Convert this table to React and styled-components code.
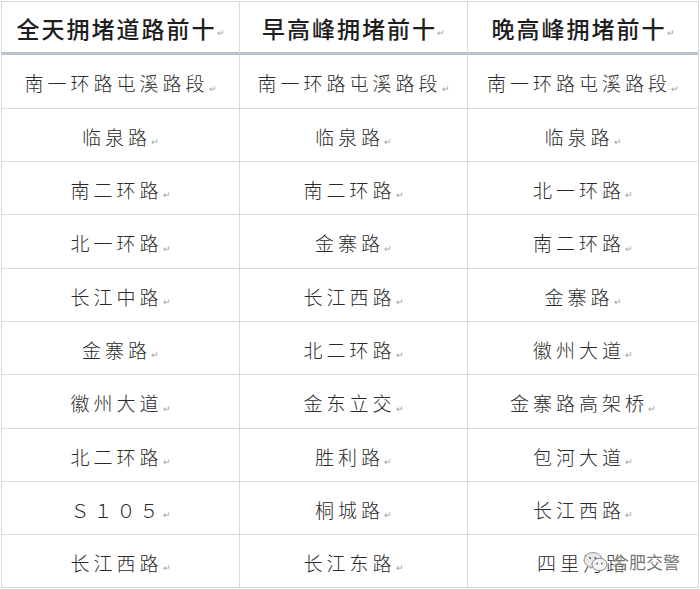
import React from "react";
import styled, { createGlobalStyle } from "styled-components";

const Global = createGlobalStyle`
  html, body { margin: 0; padding: 0; background: #ffffff; }
  body { font-family: "Noto Sans CJK SC", "Noto Sans", sans-serif; }
`;

const Page = styled.div`
  width: 700px;
  height: 589px;
  padding: 1px 1px 0 1px;
  box-sizing: border-box;
  background: #fff;
  position: relative;
  overflow: hidden;
`;

const Table = styled.div`
  display: grid;
  grid-template-columns: 238px 228px 1fr;
  border-top: 1px solid #d6dadf;
  border-left: 1px solid #d6dadf;
  border-right: 1px solid #d6dadf;
`;

const HeadCell = styled.div`
  height: 53px;
  box-sizing: border-box;
  display: flex;
  align-items: center;
  justify-content: center;
  border-right: ${(p) => (p.$last ? "none" : "1px solid #d6dadf")};
  border-bottom: 3px solid #b9c2ca;
  font-size: 23px;
  font-weight: 500;
  color: #1e1e1e;
  letter-spacing: 2px;
  padding-top: 2px;
`;

const Cell = styled.div`
  height: ${(p) => p.$h}px;
  box-sizing: border-box;
  display: flex;
  align-items: center;
  justify-content: center;
  border-right: ${(p) => (p.$last ? "none" : "1px solid #d6dadf")};
  border-bottom: 1px solid #d6dadf;
  font-size: 19px;
  font-weight: 300;
  color: #2a2a2a;
  letter-spacing: 4px;
  padding-top: 2px;
`;

const Mark = styled.span`
  font-size: 9px;
  line-height: 9px;
  color: #9aa0a6;
  letter-spacing: 0;
  align-self: flex-end;
  margin-bottom: 15px;
`;

const Watermark = styled.div`
  position: absolute;
  left: 583px;
  top: 549px;
  display: flex;
  align-items: center;
  gap: 3px;
  color: rgba(90, 90, 90, 0.85);
  font-size: 17px;
  font-weight: 400;
`;

const WmText = styled.span`
  text-shadow: 0 0 2px #fff, 0 0 2px #fff;
`;

const headers = ["全天拥堵道路前十", "早高峰拥堵前十", "晚高峰拥堵前十"];
const rows = [
  ["南一环路屯溪路段", "南一环路屯溪路段", "南一环路屯溪路段"],
  ["临泉路", "临泉路", "临泉路"],
  ["南二环路", "南二环路", "北一环路"],
  ["北一环路", "金寨路", "南二环路"],
  ["长江中路", "长江西路", "金寨路"],
  ["金寨路", "北二环路", "徽州大道"],
  ["徽州大道", "金东立交", "金寨路高架桥"],
  ["北二环路", "胜利路", "包河大道"],
  ["Ｓ１０５", "桐城路", "长江西路"],
  ["长江西路", "长江东路", "四里河路"],
];
const heights = [54, 53, 53, 54, 53, 53, 54, 53, 53, 53];

export default function App() {
  return (
    <Page>
      <Global />
      <Table>
        {headers.map((h, i) => (
          <HeadCell key={h} $last={i === 2}>
            {h}
            <Mark>↵</Mark>
          </HeadCell>
        ))}
        {rows.map((r, ri) =>
          r.map((c, ci) => (
            <Cell key={ri + "-" + ci} $last={ci === 2} $h={heights[ri]}>
              {c}
              {!(ri === 9 && ci === 2) && <Mark>↵</Mark>}
            </Cell>
          ))
        )}
      </Table>
      <Watermark>
        <svg width="26" height="22" viewBox="0 0 26 22">
          <ellipse cx="10" cy="9" rx="9" ry="7.5" fill="#e8e8e8" stroke="#9a9a9a" strokeWidth="1" />
          <ellipse cx="16.5" cy="13.5" rx="7.5" ry="6.2" fill="#f4f4f4" stroke="#8a8a8a" strokeWidth="1" />
          <circle cx="7" cy="7" r="1.1" fill="#666" />
          <circle cx="12.5" cy="7" r="1.1" fill="#666" />
          <circle cx="14" cy="12.5" r="0.9" fill="#666" />
          <circle cx="19" cy="12.5" r="0.9" fill="#666" />
        </svg>
        <WmText>合肥交警</WmText>
      </Watermark>
    </Page>
  );
}
